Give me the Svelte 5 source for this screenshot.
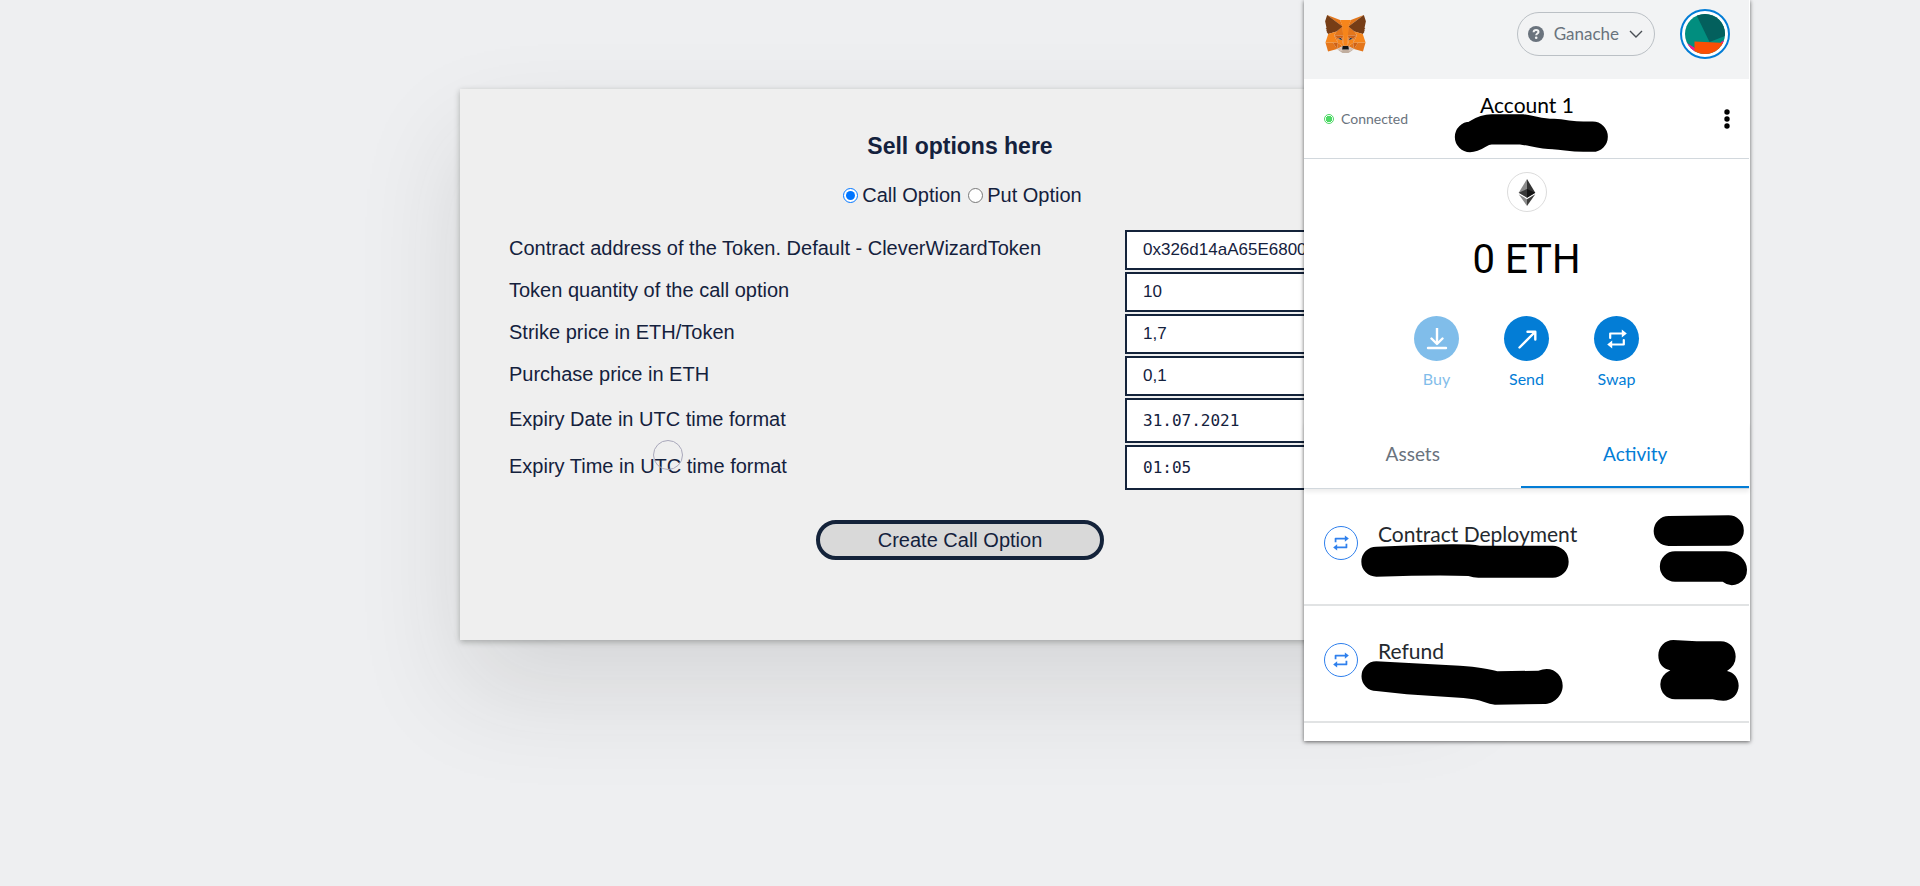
<script>
  let kind = $state('call');
  let tab = $state('activity');

  const fields = $state([
    { id: 'token', label: 'Contract address of the Token. Default - CleverWizardToken', value: '0x326d14aA65E6800' },
    { id: 'quantity', label: 'Token quantity of the call option', value: '10' },
    { id: 'strike', label: 'Strike price in ETH/Token', value: '1,7' },
    { id: 'price', label: 'Purchase price in ETH', value: '0,1' },
    { id: 'date', label: 'Expiry Date in UTC time format', value: '31.07.2021', mono: true },
    { id: 'time', label: 'Expiry Time in UTC time format', value: '01:05', mono: true }
  ]);

  const history = ['Contract Deployment', 'Refund'];
</script>

{#snippet swapIcon()}
  <svg class="swap" viewBox="0 0 20 20" aria-hidden="true">
    <path d="M3.200 9V4.500H15.500M16.800 11V15.500H4.500" fill="none" stroke="currentColor" stroke-width="2.200" stroke-linejoin="round" />
    <path d="M14.800 .5L19.800 4.500L14.800 8.500ZM5.200 11.500L.2 15.500L5.200 19.500Z" fill="currentColor" />
  </svg>
{/snippet}

<main>
  <form class="card" onsubmit={(e) => e.preventDefault()}>
    <h1>Sell options here</h1>
    <div class="kinds">
      <label><input type="radio" name="kind" value="call" bind:group={kind} />Call Option</label>
      <label><input type="radio" name="kind" value="put" bind:group={kind} />Put Option</label>
    </div>
    <div class="fields">
      {#each fields as f (f.id)}
        <div class="field" class:mono={f.mono}>
          <label for={f.id}>{f.label}</label>
          <input id={f.id} type="text" bind:value={f.value} />
        </div>
      {/each}
    </div>
    <button class="create" type="submit">Create Call Option</button>
    <span class="pointer"></span>
  </form>

  <aside class="wallet">
    <header>
      <svg class="fox" viewBox="31 35 256.5 237.5" aria-hidden="true">
        <path fill="#e2761b" d="M274.1 35.5L174.6 109.4L193 65.8Z" />
        <path fill="#e4761b" d="M44.4 35.5L143.1 110.1L125.6 65.8ZM238.3 206.8L211.8 247.4L268.5 263L284.8 207.7ZM33.9 207.7L50.1 263L106.8 247.4L80.3 206.8ZM103.6 138.2L87.8 162.1L144.1 164.6L142.1 104.1ZM214.9 138.2L175.9 103.4L174.6 164.6L230.8 162.1ZM106.8 247.4L140.6 230.9L111.4 208.1ZM177.9 230.9L211.8 247.4L207.1 208.1Z" />
        <path fill="#d7c1b3" d="M211.8 247.4L177.9 230.9L180.6 253L180.3 262.3ZM106.8 247.4L138.3 262.3L138.1 253L140.6 230.9Z" />
        <path fill="#233447" d="M138.8 193.5L110.6 185.2L130.5 176.1ZM179.7 193.5L188 176.1L208 185.2Z" />
        <path fill="#cd6116" d="M106.8 247.4L111.6 206.8L80.3 207.7ZM207 206.8L211.8 247.4L238.3 207.7ZM230.8 162.1L174.6 164.6L179.8 193.5L188.1 176.1L208.1 185.2ZM110.6 185.2L130.6 176.1L138.8 193.5L144.1 164.6L87.8 162.1Z" />
        <path fill="#e4751f" d="M87.8 162.1L111.4 208.1L110.6 185.2ZM208.1 185.2L207.1 208.1L230.8 162.1ZM144.1 164.6L138.8 193.5L145.4 227.6L146.9 182.7ZM174.6 164.6L171.9 182.6L173.1 227.6L179.8 193.5Z" />
        <path fill="#f6851b" d="M179.8 193.5L173.1 227.6L177.9 230.9L207.1 208.1L208.1 185.2ZM110.6 185.2L111.4 208.1L140.6 230.9L145.4 227.6L138.8 193.5Z" />
        <path fill="#c0ad9e" d="M180.3 262.3L180.6 253L178.1 250.8H140.4L138.1 253L138.3 262.3L106.8 247.4L117.8 256.4L140.1 271.9H178.4L200.8 256.4L211.8 247.4Z" />
        <path fill="#161616" d="M177.9 230.9L173.1 227.6H145.4L140.6 230.9L138.1 253L140.4 250.8H178.1L180.6 253Z" />
        <path fill="#763d16" d="M278.3 114.2L286.8 73.4L274.1 35.5L177.9 106.9L214.9 138.2L267.2 153.5L278.8 140L273.8 136.4L281.8 129.1L275.6 124.3L283.6 118.2ZM31.8 73.4L40.3 114.2L34.9 118.2L42.9 124.3L36.8 129.1L44.8 136.4L39.8 140L51.3 153.5L103.6 138.2L140.6 106.9L44.4 35.5Z" />
        <path fill="#f6851b" d="M267.2 153.5L214.9 138.2L230.8 162.1L207.1 208.1L238.3 207.7H284.8ZM103.6 138.2L51.3 153.5L33.9 207.7H80.3L111.4 208.1L87.8 162.1ZM174.6 164.6L177.9 106.9L193.1 65.8H125.6L140.6 106.9L144.1 164.6L145.3 182.8L145.4 227.6H173.1L173.3 182.8Z" />
      </svg>
      <button class="network" type="button">
        <svg class="help" viewBox="0 0 16 16" aria-hidden="true">
          <circle cx="8" cy="8" r="8" fill="#6a737d" />
          <path d="M5.6 6.2C5.7 4.6 6.7 3.9 8.1 3.9C9.5 3.9 10.5 4.7 10.5 5.9C10.5 7.6 8.2 7.5 8.2 9.3" fill="none" stroke="#f2f3f4" stroke-width="2" />
          <circle cx="8.2" cy="11.8" r="1.300" fill="#f2f3f4" />
        </svg>
        Ganache
        <svg class="chevron" viewBox="0 0 14 8" aria-hidden="true">
          <path d="M1 1L7 7L13 1" fill="none" stroke="#4a4f55" stroke-width="1.4" />
        </svg>
      </button>
      <button class="avatar" type="button" aria-label="My accounts">
        <svg viewBox="0 0 40 40" aria-hidden="true">
          <clipPath id="face"><circle cx="20" cy="20" r="20" /></clipPath>
          <g clip-path="url(#face)">
            <path fill="#018e7f" d="M0 0H40V40H0Z" />
            <path fill="#f5178c" d="M0 28L10 34V40H0ZM36 28L40 26V32H36Z" />
            <path fill="#03605d" d="M11 0H40V22L24.5 28Z" />
            <path fill="#fb4f04" d="M9.500 27.500L40 29V40H9.500Z" />
          </g>
        </svg>
      </button>
    </header>

    <section class="account">
      <span class="status"><i></i>Connected</span>
      <strong>Account 1</strong>
      <button class="more" type="button" aria-label="Account options">
        <svg viewBox="0 0 6 20" aria-hidden="true"><circle cx="3" cy="3" r="2.700" /><circle cx="3" cy="10" r="2.700" /><circle cx="3" cy="17" r="2.700" /></svg>
      </button>
    </section>

    <section class="balance">
      <span class="coin">
        <svg viewBox="0 0 256 417" aria-hidden="true">
          <path fill="#343434" d="M127.900 0L256 212.300L127.900 288Z" />
          <path fill="#8c8c8c" d="M128 0L0 212.300L128 288Z" />
          <path fill="#3c3c3b" d="M128 312.200V417L256 236.600Z" />
          <path fill="#8c8c8c" d="M128 417V312.200L0 236.600Z" />
          <path fill="#141414" d="M128 288L256 212.300L128 154.200Z" />
          <path fill="#393939" d="M0 212.300L128 288V154.200Z" />
        </svg>
      </span>
      <p class="amount">0 ETH</p>
      <div class="actions">
        <button type="button" disabled>
          <span class="disc">
            <svg viewBox="0 0 22 22" aria-hidden="true"><path d="M11 0V15M5.500 10.500L11 16L16.500 10.500M2 20H20" /></svg>
          </span>
          Buy
        </button>
        <button type="button">
          <span class="disc">
            <svg viewBox="0 0 22 22" aria-hidden="true"><path d="M3.500 19.500L19 4M11.500 3.700H19.300V11.500" /></svg>
          </span>
          Send
        </button>
        <button type="button">
          <span class="disc">{@render swapIcon()}</span>
          Swap
        </button>
      </div>
    </section>

    <nav>
      <button type="button" class:active={tab === 'assets'} onclick={() => (tab = 'assets')}>Assets</button>
      <button type="button" class:active={tab === 'activity'} onclick={() => (tab = 'activity')}>Activity</button>
    </nav>

    <ul>
      {#each history as item}
        <li><span class="ring">{@render swapIcon()}</span>{item}</li>
      {/each}
    </ul>

    <svg class="marks" viewBox="12 0 1338 2220" aria-hidden="true">
      <path d="M510 411C530 411 540 388 575 388H665C700 392 720 402 760 402C800 404 810 410 850 410H878" fill="none" stroke="#000" stroke-width="91" stroke-linecap="round" stroke-linejoin="round" />
      <path d="M229 1640L360 1635Q500 1630 540 1637H758A48 48 0 0 1 758 1733H535Q520 1733 505 1728Q420 1724 229 1730A40 40 0 0 1 229 1640Z" />
      <path d="M1106 1548L1286 1546A40 40 0 0 1 1286 1637L1106 1638A40 40 0 0 1 1106 1548Z" />
      <path d="M1125 1654H1278C1315 1656 1341 1680 1341 1709A45 45 0 0 1 1268 1745H1125A40 40 0 0 1 1125 1654Z" />
      <path d="M229 1984L480 1997Q560 2003 592 2014L715 2012Q728 2007 740 2007C768 2007 788 2030 788 2057C788 2088 760 2112 732 2112L585 2114Q570 2112 550 2105Q530 2098 490 2094L320 2083L229 2073A40 40 0 0 1 229 1984Z" />
      <path d="M1120 1920L1190 1924H1262C1290 1924 1307 1945 1307 1970Q1307 1996 1281 2013C1302 2017 1316 2035 1316 2057C1316 2082 1296 2102 1270 2102Q1252 2102 1238 2098H1125C1100 2098 1081 2078 1081 2053Q1081 2026 1111 2011C1088 2007 1075 1990 1075 1966C1075 1940 1095 1920 1120 1920Z" />
    </svg>
  </aside>
</main>

<style>
  :global(body) {
    margin: 0;
    background: #eeeff1;
  }

  main {
    position: relative;
    box-sizing: border-box;
    min-height: 100vh;
    padding: 89px 24px;
    overflow: hidden;
    font-family: 'Liberation Sans', Arial, sans-serif;
    color: #14213d;
  }

  button {
    border: 0;
    padding: 0;
    background: none;
    font: inherit;
    color: inherit;
  }

  .card {
    position: relative;
    box-sizing: border-box;
    max-width: 1000px;
    margin: 0 auto;
    padding: 43px 49px 80px;
    background: #efefef;
    box-shadow: 0 50px 100px rgba(40, 45, 45, 0.12), 0 2px 6px rgba(30, 35, 30, 0.3);
    display: flex;
    flex-direction: column;
    align-items: center;
    font-size: 20px;
    line-height: 24px;
  }

  h1 {
    margin: 0;
    font-size: 23px;
    line-height: 28px;
  }

  .kinds {
    display: flex;
    gap: 2px;
    margin: 23px 0;
  }

  .kinds label {
    display: flex;
    align-items: center;
  }

  .kinds input {
    width: 15px;
    height: 15px;
    margin: 0 4px 0 5px;
    accent-color: #0075ff;
  }

  .fields {
    width: 100%;
    display: grid;
    gap: 2px;
  }

  .field {
    display: grid;
    grid-template-columns: 1fr 286px;
    align-items: center;
  }

  .field label {
    padding-bottom: 4px;
  }

  .field input {
    box-sizing: border-box;
    width: 100%;
    height: 40px;
    padding: 0 16px;
    border: 2px solid #14233a;
    border-radius: 0;
    background: #fff;
    color: #14213d;
    font: 17px 'Liberation Sans', Arial, sans-serif;
  }

  .field.mono input {
    height: 45px;
    font: 16px 'DejaVu Sans Mono', monospace;
  }

  .create {
    box-sizing: border-box;
    width: 288px;
    height: 40px;
    margin-top: 30px;
    border: 4px solid #14233a;
    border-radius: 20px;
    background: #d9d9d9;
    color: #14213d;
  }

  .pointer {
    position: absolute;
    top: 351px;
    left: 193px;
    box-sizing: border-box;
    width: 30px;
    height: 30px;
    border: 1px solid #a9a8bb;
    border-radius: 50%;
  }

  .wallet {
    position: absolute;
    top: 0;
    right: 170px;
    box-sizing: border-box;
    width: 446px;
    padding: 0 1px 18px 0;
    background: #fff;
    box-shadow: 0 1px 4px rgba(0, 0, 0, 0.6);
    color: #000;
    font: 16px/20px Lato, sans-serif;
  }

  header {
    display: flex;
    align-items: center;
    height: 79px;
    padding: 0 19px 0 21px;
    background: #f2f3f4;
  }

  .fox {
    width: 41px;
    height: 38px;
    margin: 0 auto 11px 0;
  }

  .network {
    box-sizing: border-box;
    display: flex;
    align-items: center;
    gap: 10px;
    height: 44px;
    margin: 0 25px 11px 0;
    padding: 0 11px 0 10px;
    border: 1px solid #bbc0c5;
    border-radius: 22px;
    font-size: 17px;
    color: #6a737d;
  }

  .help {
    width: 16px;
    height: 16px;
  }

  .chevron {
    width: 14px;
    height: 8px;
  }

  .avatar {
    box-sizing: border-box;
    width: 50px;
    height: 50px;
    margin-bottom: 11px;
    padding: 3px;
    border: 2px solid #037dd6;
    border-radius: 50%;
    background: #fff;
  }

  .avatar svg {
    display: block;
  }

  .account {
    display: grid;
    grid-template-columns: 1fr auto 1fr;
    align-items: center;
    height: 79px;
    padding: 0 19px 0 20px;
    border-bottom: 1px solid #d2d8dd;
  }

  .status {
    display: flex;
    align-items: center;
    gap: 7px;
    font-size: 14px;
    color: #6a737d;
  }

  .status i {
    box-sizing: border-box;
    width: 10px;
    height: 10px;
    border: 1px solid #4cd964;
    border-radius: 50%;
    background: radial-gradient(circle, #4cd964 3px, #fff 3px);
  }

  .account strong {
    padding-bottom: 27px;
    font-size: 21px;
    font-weight: 400;
  }

  .more {
    justify-self: end;
    width: 6px;
    height: 20px;
  }

  .more svg {
    display: block;
  }

  .balance {
    display: flex;
    flex-direction: column;
    align-items: center;
    padding-top: 13px;
  }

  .coin {
    box-sizing: border-box;
    display: grid;
    place-items: center;
    width: 40px;
    height: 40px;
    border: 1px solid #dcdcdc;
    border-radius: 50%;
  }

  .coin svg {
    width: 18px;
    height: 27px;
  }

  .amount {
    margin: 24px 0 32px;
    font: 40px/48px Roboto, sans-serif;
  }

  .actions {
    display: flex;
    gap: 45px;
  }

  .actions button {
    display: flex;
    flex-direction: column;
    align-items: center;
    gap: 8px;
    width: 45px;
    color: #037dd6;
  }

  .actions button:disabled {
    opacity: 0.5;
  }

  .disc {
    display: grid;
    place-items: center;
    width: 45px;
    height: 45px;
    border-radius: 50%;
    background: #037dd6;
    color: #fff;
  }

  .disc svg {
    width: 22px;
    height: 22px;
    fill: none;
    stroke: #fff;
    stroke-width: 2.4px;
    stroke-linecap: round;
    stroke-linejoin: round;
  }

  .disc .swap,
  .ring .swap {
    width: 20px;
    height: 20px;
    stroke: none;
  }

  nav {
    display: flex;
    margin-top: 33px;
    border-bottom: 1px solid #d2d8dd;
    box-shadow: 0 3px 4px rgba(0, 0, 0, 0.07);
  }

  nav button {
    flex: 1 1 auto;
    height: 66px;
    border-bottom: 2px solid transparent;
    font-size: 19px;
    color: #6a737d;
  }

  nav .active {
    border-color: #037dd6;
    color: #037dd6;
  }

  ul {
    margin: 0;
    padding: 0;
    list-style: none;
  }

  li {
    box-sizing: border-box;
    display: grid;
    grid-template-columns: 34px 1fr;
    column-gap: 20px;
    height: 117px;
    padding: 35px 20px 0;
    border-bottom: 2px solid #e1e3e4;
    color: #24292e;
    font-size: 21px;
  }

  .ring {
    box-sizing: border-box;
    display: grid;
    place-items: center;
    width: 34px;
    height: 34px;
    margin-top: 2px;
    border: 1px solid #2f80ed;
    border-radius: 50%;
    color: #2f80ed;
  }

  .ring .swap {
    width: 16px;
    height: 16px;
  }

  .marks {
    position: absolute;
    top: 0;
    left: 0;
    width: 446px;
    height: 740px;
    pointer-events: none;
  }
</style>
